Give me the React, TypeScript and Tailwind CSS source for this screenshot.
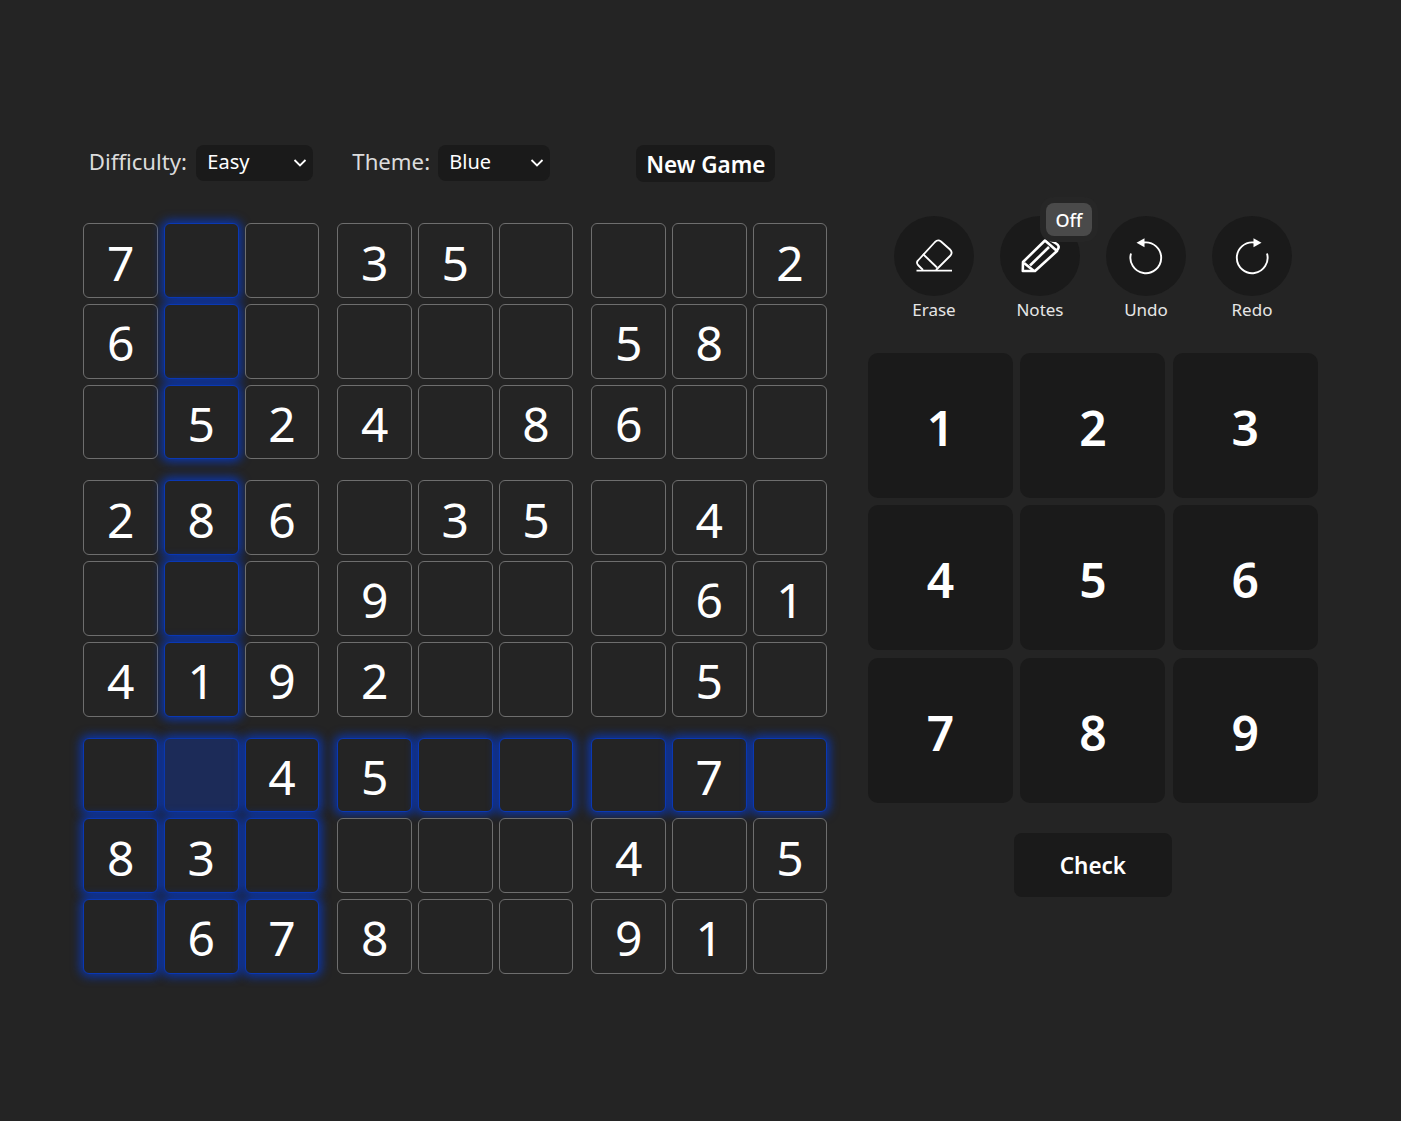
import React from "react";

const board = [
  "7  35   2",
  "6     58 ",
  " 524 86  ",
  "286 35 4 ",
  "   9   61",
  "4192   5 ",
  "  45   7 ",
  "83    4 5",
  " 678  91 ",
];

const isHot = (r: number, c: number) => c === 1 || r === 6 || (r >= 6 && c < 3);

function Cell({ r, c }: { r: number; c: number }) {
  const hot = isHot(r, c);
  const selected = r === 6 && c === 1;
  const v = board[r][c].trim();
  return (
    <div
      className={
        "flex h-[74.9px] items-center justify-center rounded-[6px] border pt-[4px] text-[48px] leading-none text-white " +
        (selected
          ? "border-[#0a38b0] bg-[#1c2b58] shadow-[0_0_10px_3px_rgba(8,55,185,0.85)]"
          : hot
            ? "border-[#0a38b4] bg-[#242424] shadow-[0_0_10px_3px_rgba(8,55,185,0.85)]"
            : "border-[#6e6e6e] bg-[#242424]")
      }
    >
      {v}
    </div>
  );
}

function Box({ br, bc }: { br: number; bc: number }) {
  const cells = [];
  for (let r = br; r < br + 3; r++) for (let c = bc; c < bc + 3; c++) cells.push(<Cell key={`${r}-${c}`} r={r} c={c} />);
  return <div className="grid w-[236px] grid-cols-3 gap-x-[6px] gap-y-[5.77px]">{cells}</div>;
}

function Tool({ label, children, badge }: { label: string; children: React.ReactNode; badge?: boolean }) {
  return (
    <div className="relative flex w-[80px] flex-col items-center">
      <div className="flex h-[80px] w-[80px] items-center justify-center rounded-full bg-[#1a1a1a] text-white">{children}</div>
      {badge && (
        <div className="absolute left-[46px] top-[-13px] flex h-[33px] w-[46px] items-center justify-center rounded-[8px] bg-[#4a4a4a] pt-[1px] text-[18px] font-medium text-white shadow-[0_0_0_6px_#262626]">
          Off
        </div>
      )}
      <div className="mt-[2px] text-[17px] leading-[24px] text-[#e6e6e6]">{label}</div>
    </div>
  );
}

function Select({ value, width }: { value: string; width: string }) {
  return (
    <div className={"relative ml-[8px] h-[36px] " + width}>
      <select
        className="h-[36px] w-full appearance-none rounded-[8px] bg-[#1a1a1a] pb-[3px] pl-[11px] text-[20px] text-white outline-none"
        defaultValue={value}
      >
        <option>{value}</option>
      </select>
      <svg
        className="pointer-events-none absolute right-[6px] top-[12px]"
        width="14"
        height="12"
        viewBox="0 0 14 12"
        fill="none"
        stroke="white"
        strokeWidth="1.8"
      >
        <path d="M1.5 3 L7 8.5 L12.5 3" />
      </svg>
    </div>
  );
}

function EraserIcon() {
  return (
    <svg width="40" height="40" viewBox="0 0 40 40" fill="none" stroke="currentColor" strokeWidth="1.8" strokeLinejoin="round">
      <path d="M9 34 L4 29 Q2 26.5 4 24.5 L21 6 Q24 3 27 5.5 L36 13.5 Q39 16.5 36.5 19.5 L22 34" />
      <path d="M9 18 L23 31.5" />
      <path d="M2.5 34.7 H38" />
    </svg>
  );
}

function PencilIcon() {
  return (
    <svg width="40" height="40" viewBox="0 0 40 40" fill="none" stroke="currentColor" strokeWidth="2.6" strokeLinejoin="round">
      <path d="M2.8 35 L3 26 L25 4.5 L37 15 L15 35 Z" />
      <path d="M10 29.5 L29 11" />
      <path d="M4 27 L14 35" />
      <path d="M30 4 L36 7.5 Q40 10 38 13 L36 15" />
    </svg>
  );
}

function TurnIcon({ flip }: { flip?: boolean }) {
  return (
    <svg width="40" height="40" viewBox="0 0 40 40" className={flip ? "-scale-x-100" : ""}>
      <path d="M18 6.5 A15.4 15.4 0 1 1 5 17.5" fill="none" stroke="currentColor" strokeWidth="1.9" />
      <path d="M10.5 6.7 L18.5 2.3 V11.2 Z" fill="currentColor" />
    </svg>
  );
}

export default function App() {
  return (
    <div className="min-h-[1121px] bg-[#242424] pl-[83.33px] pt-[145px] font-['Noto_Sans','Open_Sans',sans-serif] text-white">
      <div className="flex h-[37px] items-start pl-[5.4px]">
        <span className="h-[36px] w-[99.6px] text-[22.2px] leading-[34px] text-[#dcdcdc]">Difficulty:</span>
        <Select value="Easy" width="w-[117px]" />
        <span className="ml-[39px] h-[36px] w-[78px] text-[22.2px] leading-[34px] text-[#dcdcdc]">Theme:</span>
        <Select value="Blue" width="w-[112px]" />
        <button className="ml-[86px] h-[37px] w-[139px] rounded-[8px] bg-[#1a1a1a] pt-[2px] text-[22.5px] font-semibold leading-[35px] text-white">
          New Game
        </button>
      </div>
      <div className="mt-[41.2px] flex items-start">
        <div className="grid w-[744px] grid-cols-3 gap-x-[18px] gap-y-[20.96px]">
          {[0, 3, 6].map((br) => [0, 3, 6].map((bc) => <Box key={`${br}${bc}`} br={br} bc={bc} />))}
        </div>
        <div className="ml-[40.67px] w-[449.8px]">
          <div className="-mt-[7.2px] flex gap-[26px] pl-[26px]">
            <Tool label="Erase">
              <EraserIcon />
            </Tool>
            <Tool label="Notes" badge>
              <PencilIcon />
            </Tool>
            <Tool label="Undo">
              <TurnIcon />
            </Tool>
            <Tool label="Redo">
              <TurnIcon flip />
            </Tool>
          </div>
          <div className="mt-[31px] grid grid-cols-3 gap-[7.4px]">
            {[1, 2, 3, 4, 5, 6, 7, 8, 9].map((n) => (
              <button
                key={n}
                className="flex h-[145px] items-center justify-center rounded-[10px] bg-[#1a1a1a] pt-[5px] text-[48px] font-semibold leading-none text-white"
              >
                {n}
              </button>
            ))}
          </div>
          <div className="mt-[30px] flex justify-center">
            <button className="h-[64px] w-[158px] rounded-[8px] bg-[#1a1a1a] pt-[2px] text-[22.5px] font-semibold text-white">Check</button>
          </div>
        </div>
      </div>
    </div>
  );
}
